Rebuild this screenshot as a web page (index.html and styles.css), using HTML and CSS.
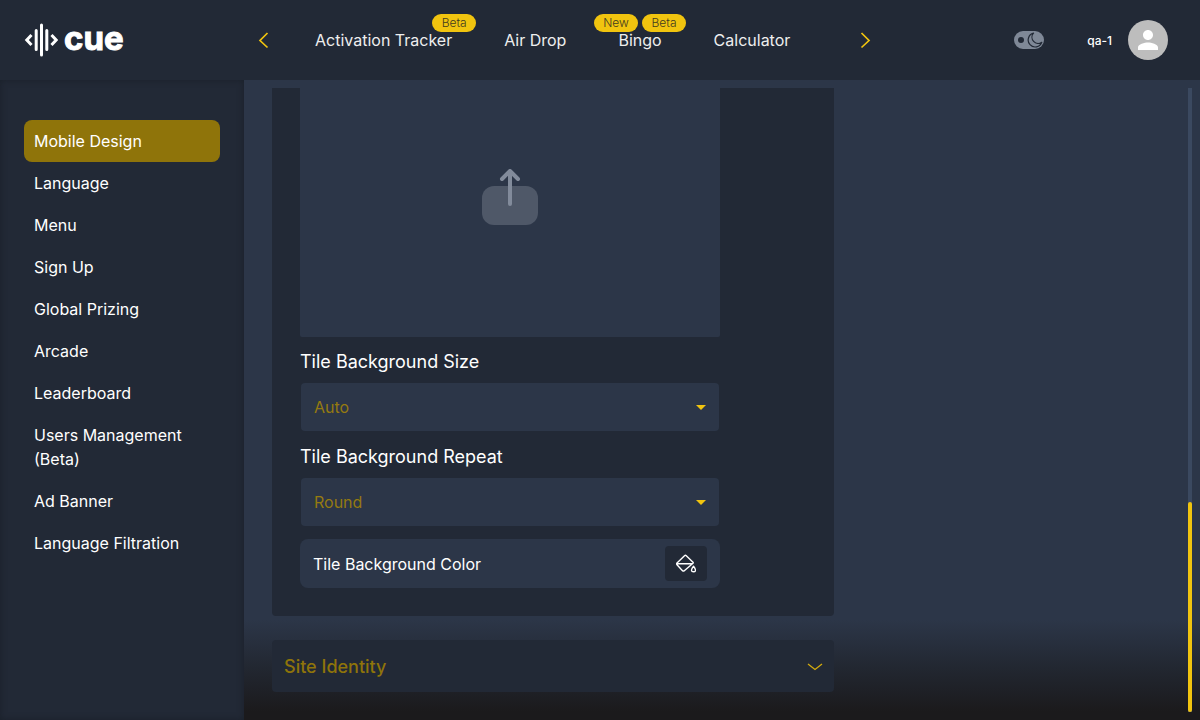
FILE: index.html
```html
<!DOCTYPE html>
<html lang="en">
<head>
<meta charset="utf-8">
<meta name="viewport" content="width=device-width, initial-scale=1">
<title>Cue – Mobile Design</title>
<link rel="stylesheet" href="styles.css">
</head>
<body>
<div class="app">
  <header class="topbar">
    <a class="logo" href="#">
      <svg class="logo-mark" width="34" height="34" viewBox="0 0 34 34" fill="none" stroke="#fff" stroke-width="3" stroke-linecap="round" stroke-linejoin="round" aria-hidden="true">
        <path d="M7.500 12 2.800 17 7.500 22M27.500 12 32.200 17 27.500 22" stroke-linecap="butt" stroke-linejoin="miter" stroke-width="3"/>
        <path d="M12.200 7.500v19M17.500 2v30M22.800 7.500v19"/>
      </svg>
      <span class="logo-text">cue</span>
    </a>
    <nav class="carousel" aria-label="Apps">
      <button class="arrow" type="button" aria-label="Previous">
        <svg width="12" height="18" viewBox="0 0 12 18" fill="none" stroke="#f1c40f" stroke-width="1.700"><path d="M10.500 2 3 9.500l7.500 7"/></svg>
      </button>
      <div class="apps">
        <a class="app-link" href="#">Activation Tracker<span class="badges end"><span class="badge">Beta</span></span></a>
        <a class="app-link" href="#">Air Drop</a>
        <a class="app-link" href="#">Bingo<span class="badges"><span class="badge">New</span><span class="badge">Beta</span></span></a>
        <a class="app-link" href="#">Calculator</a>
      </div>
      <button class="arrow" type="button" aria-label="Next">
        <svg width="12" height="18" viewBox="0 0 12 18" fill="none" stroke="#f1c40f" stroke-width="1.700"><path d="M1.500 2 9 9.500l-7.500 7"/></svg>
      </button>
    </nav>
    <div class="account">
      <button class="theme" type="button" aria-label="Dark mode">
        <span class="knob"></span>
        <svg width="16" height="16" viewBox="0 0 16 16" fill="none" stroke="#222936" stroke-width="1.200" stroke-linejoin="round"><path d="M6.500 1.200A7 7 0 1 0 14.800 10.300 6.200 6.200 0 0 1 6.500 1.200Z"/></svg>
      </button>
      <span class="user">qa-1</span>
      <button class="avatar" type="button" aria-label="Profile">
        <svg width="30" height="30" viewBox="0 0 24 24" fill="#fff"><path d="M12 12c2.210 0 4-1.790 4-4s-1.790-4-4-4-4 1.790-4 4 1.790 4 4 4zm0 2c-2.670 0-8 1.340-8 4v2h16v-2c0-2.660-5.330-4-8-4z"/></svg>
      </button>
    </div>
  </header>
  <div class="body">
    <nav class="sidebar" aria-label="Settings">
      <a class="side-link active" href="#">Mobile Design</a>
      <a class="side-link" href="#">Language</a>
      <a class="side-link" href="#">Menu</a>
      <a class="side-link" href="#">Sign Up</a>
      <a class="side-link" href="#">Global Prizing</a>
      <a class="side-link" href="#">Arcade</a>
      <a class="side-link" href="#">Leaderboard</a>
      <a class="side-link" href="#">Users Management (Beta)</a>
      <a class="side-link" href="#">Ad Banner</a>
      <a class="side-link" href="#">Language Filtration</a>
    </nav>
    <main class="content">
      <div class="panels">
        <section class="panel">
          <div class="fields">
            <button class="dropzone" type="button" aria-label="Upload tile background">
              <svg width="56" height="56" viewBox="0 0 56 56" fill="none"><rect y="17" width="56" height="39" rx="12" fill="#4f5868"/><path d="M28 35V2.500M20 10l8-8 8 8" stroke="#828b9b" stroke-width="4" stroke-linecap="round" stroke-linejoin="round"/></svg>
            </button>
            <label class="label" for="size">Tile Background Size</label>
            <div class="select-box"><select id="size"><option>Auto</option><option>Cover</option><option>Contain</option></select></div>
            <label class="label" for="repeat">Tile Background Repeat</label>
            <div class="select-box"><select id="repeat"><option>Round</option><option>Repeat</option><option>Space</option></select></div>
            <div class="color-row">
              <span id="color-label">Tile Background Color</span>
              <button class="color-button" type="button" aria-labelledby="color-label">
                <svg width="20" height="20" viewBox="0 0 20 20" fill="none" stroke="#fff" stroke-width="1.400" stroke-linejoin="round"><path d="M8.500 1.700q.9-.8 1.800 0l6.700 6.600q.4.500 0 1L8.300 16.700q-.9.700-1.800 0L1 10.700q-.8-.9 0-1.800ZM.9 9.800H16.500M17.500 12.300c-3 3.800-2.300 5.500 0 5.500s3-1.700 0-5.500Z"/></svg>
              </button>
            </div>
          </div>
        </section>
        <button class="accordion" type="button" aria-expanded="false">
          <span>Site Identity</span>
          <svg width="16" height="8" viewBox="0 0 16 8" fill="none" stroke="#d5ac0d" stroke-width="1.300"><path d="M1 1l7 5.500L15 1"/></svg>
        </button>
      </div>
      <div class="scrollbar" aria-hidden="true"><div class="thumb"></div></div>
    </main>
  </div>
</div>
</body>
</html>
```

FILE: styles.css
```css
* { box-sizing: border-box; }

body {
  margin: 0;
  font-family: Inter, sans-serif;
  font-size: 16px;
  line-height: 24px;
  color: #fff;
  background: #2c3648;
}

button {
  font: inherit;
  color: inherit;
  border: 0;
  padding: 0;
  background: none;
  cursor: pointer;
}

a { color: inherit; text-decoration: none; }
svg { display: block; }

.app { min-height: 100vh; display: flex; flex-direction: column; }

.topbar {
  display: flex;
  align-items: center;
  height: 80px;
  padding: 0 32px 0 24px;
  background: #222936;
}

.logo { display: flex; align-items: center; gap: 6px; width: 231px; }
.logo-text {
  padding-bottom: 4px;
  font-size: 33px;
  line-height: 40px;
  font-weight: 700;
  -webkit-text-stroke: 1px #fff;
}

.carousel { display: flex; align-items: center; }
.arrow { width: 16px; display: flex; justify-content: center; }
.apps { display: flex; gap: 52px; padding: 0 70px 0 44px; width: 587px; }
.app-link { position: relative; white-space: nowrap; color: #eee; }

.badges {
  position: absolute;
  top: -14px;
  left: 50%;
  transform: translateX(-50%);
  display: flex;
  gap: 4px;
}
.badges.end { left: 100%; margin-left: 2px; }
.badge {
  width: 44px;
  height: 18px;
  border-radius: 9px;
  background: #f1c40f;
  color: #3f3a20;
  font-size: 12px;
  font-weight: 300;
  line-height: 18px;
  text-align: center;
}

.account { display: flex; align-items: center; margin-left: auto; }
.theme {
  display: flex;
  align-items: center;
  justify-content: space-between;
  width: 30px;
  height: 18px;
  padding: 0 1px 0 4px;
  margin-right: 43px;
  border-radius: 9px;
  background: #7f8897;
}
.knob { width: 6px; height: 6px; border-radius: 50%; background: #222936; }
.user { font-size: 12px; margin-right: 16px; padding-top: 2px; font-weight: 500; }
.avatar {
  display: flex;
  align-items: center;
  justify-content: center;
  width: 40px;
  height: 40px;
  border-radius: 50%;
  background: #bdbdbd;
}

.body { display: flex; flex: 1; }

.sidebar {
  width: 244px;
  padding: 40px 24px;
  background: #222936;
  box-shadow: inset 0 0 6px #1a202a;
}
.side-link { display: block; padding: 9px 10px; border-radius: 8px; }
.side-link.active { background: #8f740a; }

.content {
  display: flex;
  justify-content: space-between;
  flex: 1;
  padding: 8px 8px 8px 28px;
  background: linear-gradient(to top, #1b1a1c 8px, #222731 52px, #2c3648 100px);
}

.panels { width: 562px; }
.panel {
  padding: 0 28px 28px;
  margin-bottom: 24px;
  border-radius: 0 0 4px 4px;
  background: #222936;
}
.fields { display: flex; flex-direction: column; max-width: 420px; }

.dropzone {
  display: flex;
  justify-content: center;
  height: 249px;
  padding-top: 81px;
  border-radius: 0 0 2px 2px;
  background: #2c3648;
}

.label { font-size: 18px; padding: 13px 0 8px; }

.select-box {
  position: relative;
  margin: 1px;
  border-radius: 4px;
  background: #2c3648;
}
.select-box::after {
  content: "";
  position: absolute;
  right: 13px;
  top: 22px;
  border: 5px solid transparent;
  border-top-color: #f1c40f;
  border-bottom-width: 0;
  pointer-events: none;
}
.select-box select {
  appearance: none;
  display: block;
  width: 100%;
  height: 48px;
  padding: 0 32px 0 13px;
  border: 0;
  background: transparent;
  color: #957a10;
  font: inherit;
}

.color-row {
  display: flex;
  align-items: center;
  justify-content: space-between;
  height: 49px;
  margin-top: 12px;
  padding: 0 13px;
  border-radius: 8px;
  background: #2c3648;
}
.color-button {
  display: flex;
  align-items: center;
  justify-content: center;
  width: 42px;
  height: 35px;
  border-radius: 4px;
  background: #222936;
}

.accordion {
  display: flex;
  align-items: center;
  justify-content: space-between;
  width: 100%;
  height: 52px;
  padding: 1px 11px 0 12px;
  border-radius: 4px;
  background: #222936;
  color: #8f740a;
  font-size: 18px;
  font-weight: 500;
}

.scrollbar {
  display: flex;
  align-items: flex-end;
  width: 4px;
  background: #3b4960;
}
.thumb { width: 4px; height: 210px; border-radius: 2px; background: #f1c40f; }
```
